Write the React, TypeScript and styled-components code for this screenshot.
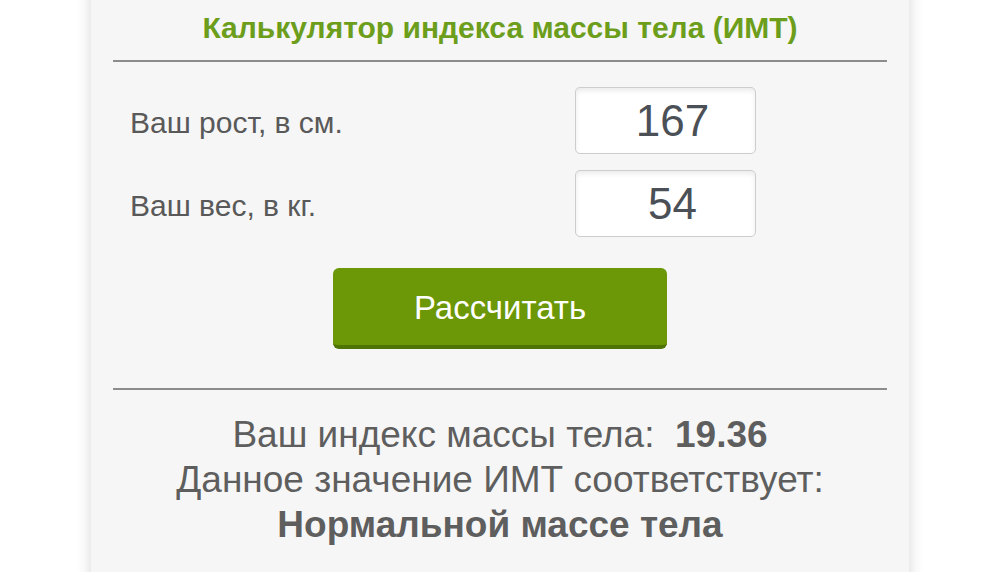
import * as React from "react";
import styled, { createGlobalStyle } from "styled-components";

const Global = createGlobalStyle`
    html, body {
        margin: 0;
        padding: 0;
        background: #ffffff;
        overflow: hidden;
    }
    body {
        font-family: "Liberation Sans", Arial, sans-serif;
    }
`;

const Page = styled.div`
    width: 1000px;
    height: 572px;
    display: flex;
    justify-content: center;
    overflow: hidden;
`;

const Card = styled.div`
    width: 818px;
    height: 640px;
    margin-top: -20px;
    padding-top: 20px;
    background: #f6f6f6;
    box-shadow: 0 0 14px rgba(0, 0, 0, 0.16);
    display: flex;
    flex-direction: column;
    align-items: stretch;
`;

const Title = styled.h1`
    margin: 0;
    height: 60px;
    display: flex;
    align-items: center;
    justify-content: center;
    padding-bottom: 4px;
    box-sizing: border-box;
    font-size: 30px;
    font-weight: 700;
    color: #6c9e1c;
`;

const Divider = styled.hr`
    margin: 0 22px;
    border: 0;
    height: 2px;
    background: #8c8c8c;
`;

const Form = styled.div`
    display: flex;
    flex-direction: column;
    gap: 16px;
    padding: 25px 0 0 39px;
`;

const Row = styled.div`
    display: flex;
    align-items: center;
`;

const Label = styled.label`
    width: 445px;
    font-size: 30px;
    color: #595959;
    padding-top: 4px;
`;

const Field = styled.input`
    box-sizing: border-box;
    width: 181px;
    height: 67px;
    border: 1px solid #cdcdcd;
    border-radius: 5px;
    background: #ffffff;
    box-shadow: inset 0 3px 5px rgba(0, 0, 0, 0.08);
    font-family: "Liberation Sans", Arial, sans-serif;
    font-size: 44px;
    color: #4b5057;
    text-align: center;
    padding: 0 0 0 14px;
    outline: none;
`;

const Actions = styled.div`
    display: flex;
    justify-content: center;
    padding: 31px 0 39px;
`;

const Button = styled.button`
    width: 334px;
    height: 81px;
    border: 0;
    border-bottom: 4px solid #4f7406;
    border-radius: 6px;
    background: #6c9706;
    color: #ffffff;
    font-family: "Liberation Sans", Arial, sans-serif;
    font-size: 33px;
    padding: 2px 0 0;
    cursor: pointer;
`;

const Result = styled.div`
    padding-top: 22px;
    display: flex;
    flex-direction: column;
    align-items: center;
    font-size: 37px;
    line-height: 45px;
    color: #5e5e5e;
`;

const Line = styled.div<{ $bold?: boolean }>`
    font-weight: ${({ $bold }) => ($bold ? 700 : 400)};
    white-space: pre;
`;

const Value = styled.b`
    font-weight: 700;
`;

export default function App() {
    const [height, setHeight] = React.useState("167");
    const [weight, setWeight] = React.useState("54");

    return (
        <Page>
            <Global />
            <Card>
                <Title>Калькулятор индекса массы тела (ИМТ)</Title>
                <Divider />
                <Form>
                    <Row>
                        <Label>Ваш рост, в см.</Label>
                        <Field value={height} onChange={(e) => setHeight(e.target.value)} />
                    </Row>
                    <Row>
                        <Label>Ваш вес, в кг.</Label>
                        <Field value={weight} onChange={(e) => setWeight(e.target.value)} />
                    </Row>
                </Form>
                <Actions>
                    <Button>Рассчитать</Button>
                </Actions>
                <Divider />
                <Result>
                    <Line>
                        Ваш индекс массы тела:  <Value>19.36</Value>
                    </Line>
                    <Line>Данное значение ИМТ соответствует:</Line>
                    <Line $bold>Нормальной массе тела</Line>
                </Result>
            </Card>
        </Page>
    );
}
